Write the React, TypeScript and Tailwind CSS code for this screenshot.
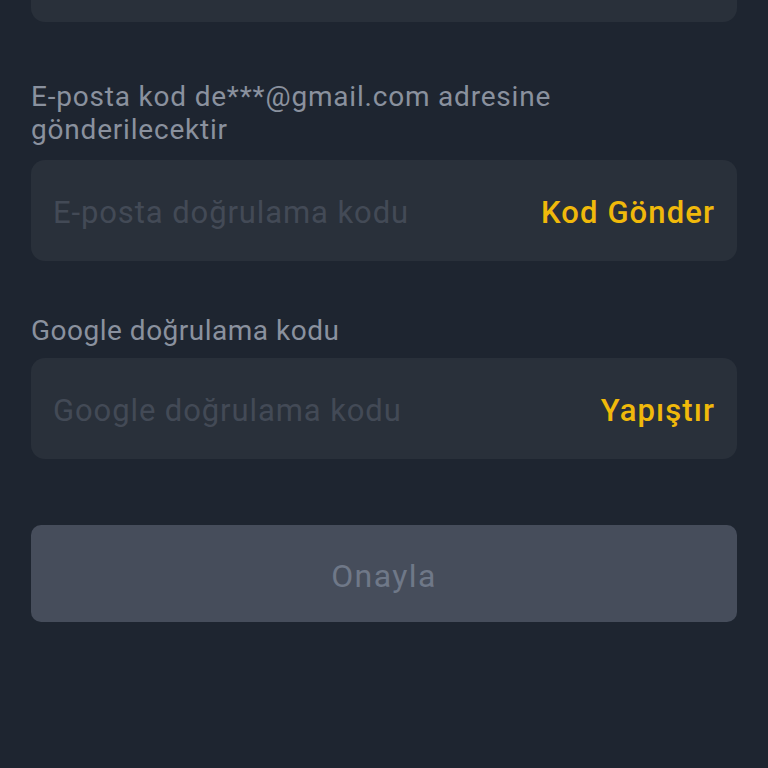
import React, { useState } from "react";

const font = { fontFamily: 'Roboto, "Noto Sans", sans-serif' };

interface ICodeField {
  placeholder: string;
  action: string;
}

const CodeField = ({ placeholder, action }: ICodeField) => {
  const [value, setValue] = useState("");

  return (
    <div className="flex h-[101px] items-center rounded-[14px] bg-[#29303a] pl-[22px] pr-[22px] pt-[5px]">
      <input
        value={value}
        onChange={(e) => setValue(e.target.value)}
        placeholder={placeholder}
        className="min-w-0 flex-1 bg-transparent text-[31px] tracking-[0.9px] text-[#eaecef] outline-none placeholder:text-[#434a56]"
        style={font}
      />
      <button
        type="button"
        className="text-[31px] font-medium tracking-[1.1px] text-[#f0b90b]"
        style={font}
      >
        {action}
      </button>
    </div>
  );
};

export default function App() {
  return (
    <div className="flex min-h-screen flex-col bg-[#1e2530] px-[31px]" style={font}>
      {/* previous field, scrolled mostly out of view */}
      <div className="-mt-[79px] h-[101px] shrink-0 rounded-[14px] bg-[#29303a]" />

      <p className="mt-[58px] text-[28px] leading-[33px] tracking-[0.8px] text-[#8a919e]">
        E-posta kod de***@gmail.com adresine
        <br />
        gönderilecektir
      </p>
      <div className="mt-[14px]">
        <CodeField placeholder="E-posta doğrulama kodu" action="Kod Gönder" />
      </div>

      <p className="mt-[53px] text-[28px] leading-[33px] tracking-[0.5px] text-[#8a919e]">
        Google doğrulama kodu
      </p>
      <div className="mt-[11px]">
        <CodeField placeholder="Google doğrulama kodu" action="Yapıştır" />
      </div>

      <button
        type="button"
        disabled
        className="mt-[66px] flex h-[97px] w-full items-center justify-center rounded-[10px] bg-[#464d5b] pt-[5px] text-[32px] tracking-[1.4px] text-[#6f7888]"
      >
        Onayla
      </button>
    </div>
  );
}
